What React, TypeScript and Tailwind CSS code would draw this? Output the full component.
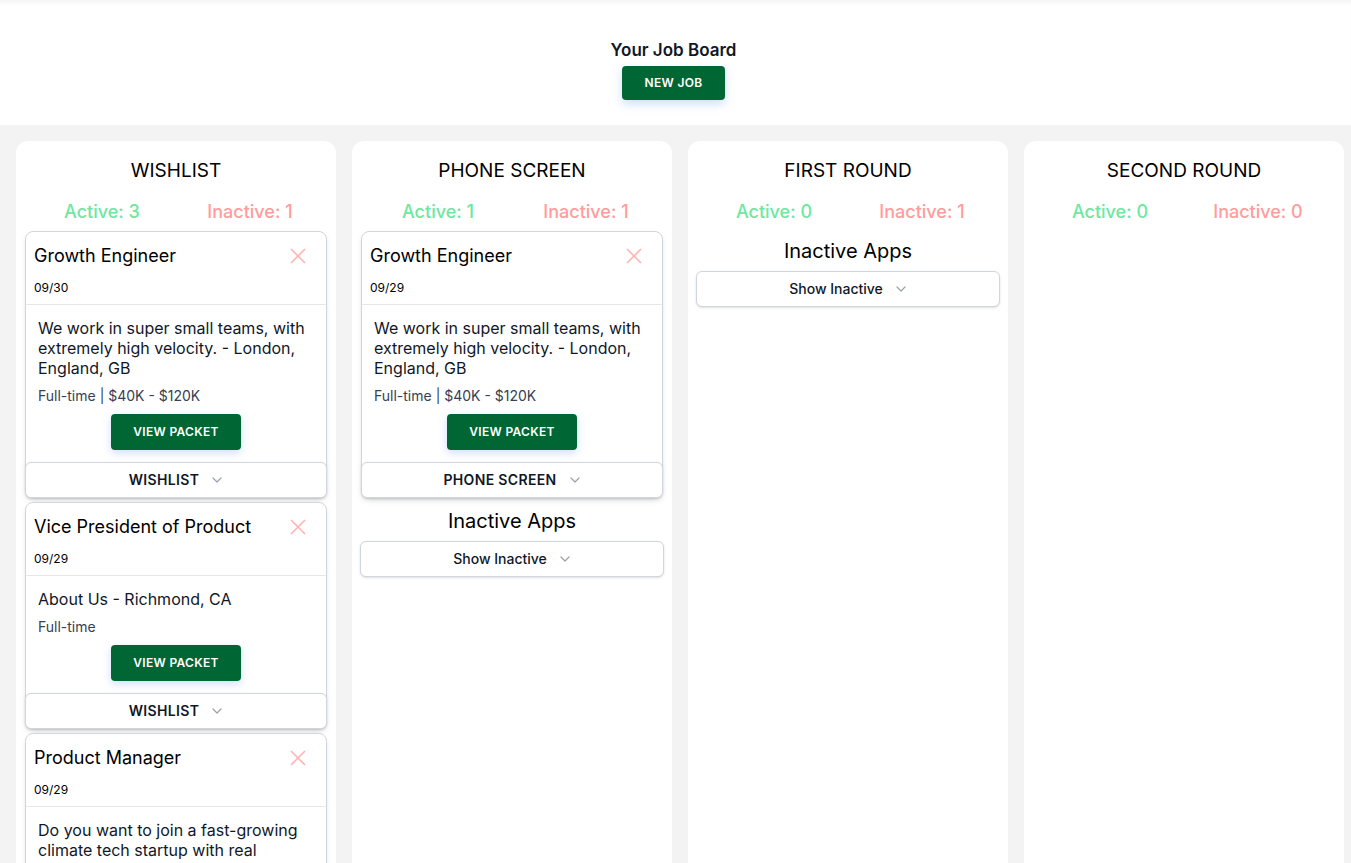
import React from 'react';

type Job = {
  title: string;
  date: string;
  description: string;
  meta: string;
  stage: string;
};

type Column = {
  name: string;
  active: number;
  inactive: number;
  jobs: Job[];
  showInactive: boolean;
};

const growth = {
  title: 'Growth Engineer',
  description: 'We work in super small teams, with extremely high velocity. - London, England, GB',
  meta: 'Full-time | $40K - $120K',
};

const columns: Column[] = [
  {
    name: 'WISHLIST',
    active: 3,
    inactive: 1,
    showInactive: false,
    jobs: [
      { ...growth, date: '09/30', stage: 'WISHLIST' },
      {
        title: 'Vice President of Product',
        date: '09/29',
        description: 'About Us - Richmond, CA',
        meta: 'Full-time',
        stage: 'WISHLIST',
      },
      {
        title: 'Product Manager',
        date: '09/29',
        description:
          'Do you want to join a fast-growing climate tech startup with real impact? - Remote / Remote (US)',
        meta: 'Full-time',
        stage: 'WISHLIST',
      },
    ],
  },
  {
    name: 'PHONE SCREEN',
    active: 1,
    inactive: 1,
    showInactive: true,
    jobs: [{ ...growth, date: '09/29', stage: 'PHONE SCREEN' }],
  },
  { name: 'FIRST ROUND', active: 0, inactive: 1, showInactive: true, jobs: [] },
  { name: 'SECOND ROUND', active: 0, inactive: 0, showInactive: false, jobs: [] },
];

const Chevron = () => (
  <svg width="12" height="12" viewBox="0 0 12 12" fill="none" className="ml-3 text-gray-400">
    <path d="M2 4l4 4 4-4" stroke="currentColor" strokeWidth="1.2" strokeLinecap="round" strokeLinejoin="round" />
  </svg>
);

const Dropdown = ({ label, upper }: { label: string; upper?: boolean }) => (
  <button
    className={`flex items-center justify-center w-full h-9 bg-white border border-gray-300 rounded-md shadow-sm text-sm text-gray-900 ${
      upper ? 'font-semibold tracking-wide' : 'font-medium'
    }`}
  >
    {label}
    <Chevron />
  </button>
);

const JobCard = ({ job }: { job: Job }) => (
  <div className="mx-px bg-white border border-gray-300 rounded-lg shadow-md">
    <div className="px-2 pt-3 pb-2 border-b border-gray-200">
      <div className="flex items-start justify-between">
        <h3 className="text-[18px] leading-6 text-black">{job.title}</h3>
        <svg width="16" height="16" viewBox="0 0 16 16" className="mt-1 mr-3 text-[#ffb3b3]">
          <path d="M1 1l14 14M15 1L1 15" stroke="currentColor" strokeWidth="1.6" />
        </svg>
      </div>
      <p className="mt-3 text-xs leading-4 text-black">{job.date}</p>
    </div>
    <div className="px-3 pt-[13px]">
      <p className="text-base leading-5 text-gray-900">{job.description}</p>
      <p className="mt-2 text-sm leading-5 text-gray-700">{job.meta}</p>
      <div className="flex justify-center mt-2">
        <button className="w-[130px] h-9 rounded bg-[#006633] text-white text-xs font-semibold tracking-wide shadow-[0_3px_8px_rgba(59,130,246,0.25)]">
          VIEW PACKET
        </button>
      </div>
    </div>
    <div className="mt-3 -mx-px -mb-px">
      <Dropdown label={job.stage} upper />
    </div>
  </div>
);

export default function App() {
  return (
    <div className="min-h-[863px] bg-[#f3f3f3] font-['Inter',sans-serif]">
      <header className="h-[125px] bg-white flex flex-col items-center pt-[40px] pr-1 shadow-[inset_0_5px_5px_-3px_rgba(0,0,0,0.06)]">
        <h1 className="text-[17px] leading-5 font-semibold text-gray-900">Your Job Board</h1>
        <button className="mt-[6px] w-[103px] h-[34px] rounded bg-[#006633] text-white text-xs font-semibold tracking-wide shadow-[0_4px_10px_rgba(59,130,246,0.25)]">
          NEW JOB
        </button>
      </header>
      <main className="flex gap-4 p-4 pb-0">
        {columns.map((col) => (
          <section key={col.name} className="w-[320px] shrink-0 min-h-[722px] bg-white rounded-t-xl px-2 pt-4">
            <h2 className="text-center text-[19px] leading-7 text-black">{col.name}</h2>
            <div className="grid grid-cols-2 mt-[13px] text-[18px] leading-7 font-medium text-center">
              <span className="text-[#6ee7a0] pl-1">Active: {col.active}</span>
              <span className="text-[#ff9c9c] pr-1">Inactive: {col.inactive}</span>
            </div>
            <div className="flex flex-col gap-1 mt-[5px]">
              {col.jobs.map((job, i) => (
                <JobCard key={i} job={job} />
              ))}
            </div>
            {col.showInactive && (
              <div className={col.jobs.length ? 'mt-[9px]' : 'mt-[6px]'}>
                <h3 className="text-center text-xl leading-7 text-black">Inactive Apps</h3>
                <div className="mt-[6px]">
                  <Dropdown label="Show Inactive" />
                </div>
              </div>
            )}
          </section>
        ))}
      </main>
    </div>
  );
}
